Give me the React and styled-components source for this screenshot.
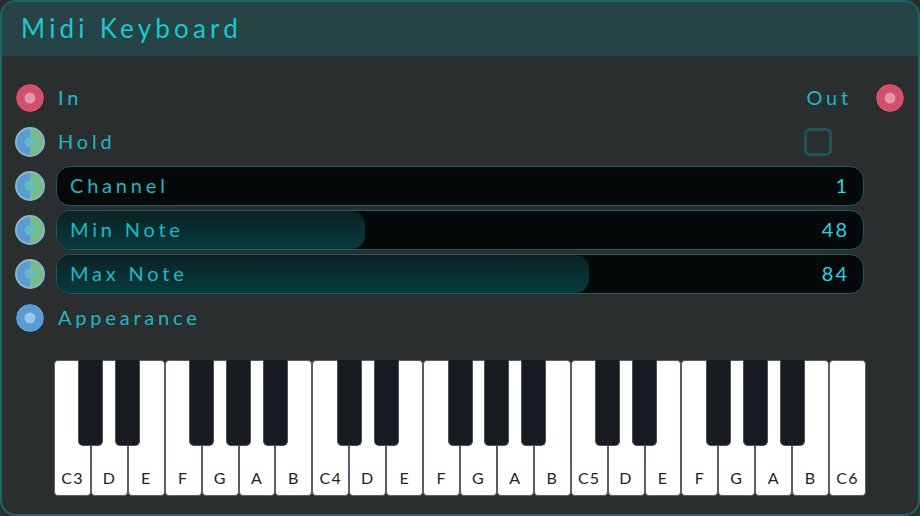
import React from "react";
import styled, { createGlobalStyle, css } from "styled-components";

const GlobalStyle = createGlobalStyle`
  html, body { margin: 0; padding: 0; background: #2b2e2f; }
  body { font-family: "Lato", "Open Sans", sans-serif; }
  * { box-sizing: border-box; }
`;

const Panel = styled.div`
  width: 920px;
  height: 516px;
  border: 2px solid #1d6466;
  border-radius: 16px;
  overflow: hidden;
  background: #2b2e2f;
  display: flex;
  flex-direction: column;
`;

const Header = styled.div`
  height: 54px;
  flex: none;
  background: #264345;
  display: flex;
  align-items: center;
  padding: 0 0 3px 19px;
  color: #1cc6d6;
  font-size: 26px;
  letter-spacing: 4.2px;
`;

const Body = styled.div`
  padding: 20px 13px 0 13px;
  display: flex;
  flex-direction: column;
`;

const Row = styled.div`
  height: 44px;
  display: flex;
  align-items: center;
  gap: 13px;
`;

const Label = styled.span`
  color: #1db8c8;
  font-size: 20px;
  letter-spacing: 3.8px;
  margin-top: -2px;
  flex: ${(p) => (p.$grow ? 1 : "none")};
`;

const Dot = styled.div`
  width: 30px;
  height: 30px;
  flex: none;
  border-radius: 50%;
  position: relative;
  ${(p) =>
    p.$kind === "red" &&
    css`
      background: #d1506a;
      border: 1px solid #1e1e20;
      &::after { background: #e595a6; }
    `}
  ${(p) =>
    p.$kind === "blue" &&
    css`
      background: #5b9bd5;
      border: 1px solid #1e1e20;
      &::after { background: #9cc6e8; }
    `}
  ${(p) =>
    p.$kind === "split" &&
    css`
      background: linear-gradient(90deg, #5b9bd5 50%, #78b98a 50%);
      border: 2px solid #86b7c4;
      &::after { background: #65b9c3; }
    `}
  &::after {
    content: "";
    position: absolute;
    width: 11px;
    height: 11px;
    border-radius: 50%;
    left: 50%;
    top: 50%;
    transform: translate(-50%, -50%);
  }
`;

const Check = styled.div`
  width: 28px;
  height: 28px;
  flex: none;
  border: 3px solid #1f5458;
  border-radius: 6px;
  margin-left: auto;
  margin-right: 73px;
`;

const Bar = styled.div`
  flex: 1;
  height: 40px;
  margin-left: -2px;
  margin-right: 41px;
  border: 1px solid #1a5c60;
  border-radius: 14px;
  background: #05090a;
  position: relative;
  overflow: hidden;
  display: flex;
  align-items: center;
  padding: 0 14px 2px 13px;
`;

const Fill = styled.div`
  position: absolute;
  left: 0;
  top: 0;
  bottom: 0;
  border-radius: 0 14px 14px 0;
  background: linear-gradient(180deg, #0b2223 0%, #073b3e 100%);
`;

const BarText = styled.span`
  position: relative;
  color: ${(p) => (p.$value ? "#22d4e6" : "#1db8c8")};
  font-size: 20px;
  letter-spacing: ${(p) => (p.$value ? 2 : 3.8)}px;
  margin-left: ${(p) => (p.$value ? "auto" : 0)};
`;

const Keyboard = styled.div`
  margin: 20px 39px 0 39px;
  height: 136px;
  display: flex;
  position: relative;
`;

const WhiteKey = styled.div`
  flex: 1;
  background: #ffffff;
  border: 1px solid #5a5e66;
  border-radius: 4px;
  display: flex;
  align-items: flex-end;
  justify-content: center;
  padding-bottom: 8px;
  color: #222428;
  font-size: 16px;
  letter-spacing: 1.2px;
`;

const BlackKey = styled.div`
  position: absolute;
  top: 0;
  width: 25px;
  height: 86px;
  margin-left: -12.5px;
  background: #181b22;
  border: 1px solid #4e535b;
  border-top: none;
  border-radius: 0 0 5px 5px;
`;

const whites = [
  "C3", "D", "E", "F", "G", "A", "B",
  "C4", "D", "E", "F", "G", "A", "B",
  "C5", "D", "E", "F", "G", "A", "B",
  "C6",
];

// boundaries (after white key index) that carry a black key
const blackAfter = [];
for (let o = 0; o < 3; o++) {
  [1, 2, 4, 5, 6].forEach((b) => blackAfter.push(o * 7 + b));
}

const sliders = [
  { name: "Channel", value: 1, fill: 0 },
  { name: "Min Note", value: 48, fill: 308 },
  { name: "Max Note", value: 84, fill: 532 },
];

export default function App() {
  return (
    <>
      <GlobalStyle />
      <Panel>
        <Header>Midi Keyboard</Header>
        <Body>
          <Row>
            <Dot $kind="red" />
            <Label $grow>In</Label>
            <Label>Out</Label>
            <Dot $kind="red" style={{ marginLeft: 10 }} />
          </Row>
          <Row>
            <Dot $kind="split" />
            <Label>Hold</Label>
            <Check />
          </Row>
          {sliders.map((s) => (
            <Row key={s.name}>
              <Dot $kind="split" />
              <Bar>
                {s.fill > 0 && <Fill style={{ width: s.fill }} />}
                <BarText>{s.name}</BarText>
                <BarText $value>{s.value}</BarText>
              </Bar>
            </Row>
          ))}
          <Row>
            <Dot $kind="blue" />
            <Label>Appearance</Label>
          </Row>
          <Keyboard>
            {whites.map((n, i) => (
              <WhiteKey key={i}>{n}</WhiteKey>
            ))}
            {blackAfter.map((b) => (
              <BlackKey key={b} style={{ left: `${(b / whites.length) * 100}%` }} />
            ))}
          </Keyboard>
        </Body>
      </Panel>
    </>
  );
}
